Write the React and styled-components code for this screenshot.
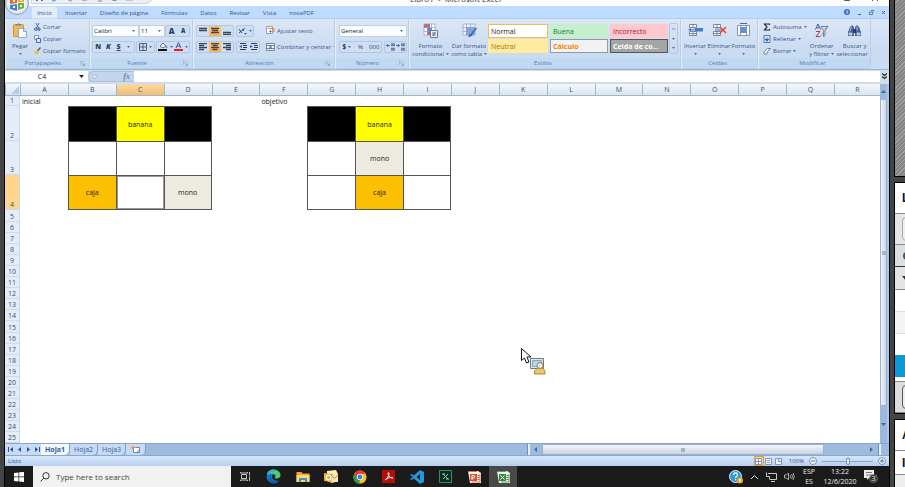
import React from "react";
import styled, { createGlobalStyle, css } from "styled-components";

const Global = createGlobalStyle`
  * { box-sizing: border-box; }
  html, body, #root { height: 100%; }
  body { margin: 0; overflow: hidden; background: #444; font-family: "Open Sans", "Noto Sans", sans-serif; font-size: 6px; color: #36558c; }
  button, input, select { font: inherit; color: inherit; margin: 0; padding: 0; border: 0; background: none; border-radius: 0; outline: 0; }
  svg { display: block; flex: none; }
`;

const Desktop = styled.div`
  display: flex;
  gap: 4px;
  height: 100vh;
  padding-left: 4px;
  background: #444;
`;
const Screen = styled.main`
  flex: 1;
  min-width: 0;
  display: flex;
  flex-direction: column;
  border: solid #000;
  border-width: 0 1px;
  background: #fff;
`;

/* ---------- title and tabs ---------- */
const TitleBar = styled.header`
  position: relative;
  flex: none;
  height: 6px;
  background: #fdfdfe;
`;
const QuickBar = styled.div`
  position: absolute;
  left: 26px;
  top: -8px;
  width: 122px;
  height: 12px;
  display: flex;
  align-items: flex-end;
  gap: 8px;
  padding: 0 6px 1px 4px;
  border: 1px solid #c9d3e2;
  border-radius: 0 0 8px 0;
  background: #e9eff8;
`;
const TitleText = styled.div`
  position: absolute;
  left: 405px;
  top: -6px;
  font-size: 8px;
  line-height: 10px;
  color: #333;
  white-space: pre;
`;
const WindowKeys = styled.div`
  position: absolute;
  right: 10px;
  top: -6px;
  display: flex;
  gap: 20px;
`;
const Orb = styled.button`
  position: absolute;
  left: 0;
  top: -9px;
  z-index: 2;
`;
const TabBar = styled.nav`
  flex: none;
  display: flex;
  gap: 1px;
  height: 13px;
  padding-left: 26px;
  background: #bfdbff;
  border-bottom: 1px solid #b4cdee;
`;
const Tab = styled.button`
  flex: none;
  height: 13px;
  line-height: 14px;
  color: #33548c;
  && { padding: 0 6px; border-radius: 3px 3px 0 0; }
  ${(p) => p.$active && css`&& { background: #e3edfa; box-shadow: inset 0 0 0 1px #c7dcf5; }`}
`;
const TabKeys = styled.div`
  margin-left: auto;
  display: flex;
  align-items: center;
  gap: 7px;
  padding-right: 3px;
`;

/* ---------- ribbon ---------- */
const Ribbon = styled.section`
  flex: none;
  display: flex;
  height: 51px;
  border-bottom: 1px solid #9db6d6;
  background: linear-gradient(#dbe7f5, #cbdcf1 60%, #c9ddf4);
`;
const Group = styled.section`
  flex: none;
  display: flex;
  flex-direction: column;
  width: ${(p) => p.$width}px;
  border: 1px solid #b7cee9;
  border-left-color: #e6f0fb;
  border-top: 0;
  border-radius: 0 0 3px 3px;
  overflow: hidden;
`;
const GroupBody = styled.div`
  flex: 1;
  display: flex;
  align-items: center;
  gap: ${(p) => p.$gap || 0}px;
  padding: 0 ${(p) => p.$pad || 0}px;
`;
const GroupTitle = styled.div`
  display: flex;
  align-items: center;
  height: 10px;
  padding-right: 4px;
  line-height: 10px;
  background: #c1d8f1;
  color: #5679b0;
  span { flex: 1; text-align: center; }
`;
const Stack = styled.div`
  flex: none;
  display: flex;
  flex-direction: column;
  gap: ${(p) => p.$gap}px;
`;
const Line = styled.div`
  display: flex;
  gap: ${(p) => p.$gap || 0}px;
`;
const BigButton = styled.button`
  flex: none;
  width: ${(p) => p.$width}px;
  height: 38px;
  && { padding-top: 3px; }
  display: flex;
  flex-direction: column;
  align-items: center;
  line-height: 8px;
  white-space: nowrap;
  svg:first-child { margin-bottom: 4px; }
`;
const Caption = styled.span`
  display: flex;
  align-items: center;
  height: 8px;
  gap: 2px;
  && svg { margin: 0; }
`;
const SmallButton = styled.button`
  display: flex;
  align-items: center;
  gap: 2px;
  height: 12px;
  line-height: 10px;
  white-space: nowrap;
`;
const ButtonSet = styled.div`
  display: flex;
  align-items: center;
  height: 12px;
  width: ${(p) => p.$width}px;
  border: 1px solid #b0c8e6;
  border-radius: 2px;
  background: #cfdff3;
`;
const Key = styled.button`
  flex: 1;
  height: 10px;
  display: flex;
  align-items: center;
  justify-content: center;
  gap: 2px;
  && {
    line-height: 10px;
    color: #2c3f60;
    font-size: ${(p) => p.$size || 6}px;
    font-weight: ${(p) => (p.$bold ? 800 : 400)};
    font-style: ${(p) => (p.$italic ? "italic" : "normal")};
    text-decoration: ${(p) => (p.$under ? "underline" : "none")};
  }
  ${(p) => p.$on && css`&& { background: linear-gradient(#fcc87c, #fdb04e); }`}
`;
const Picker = styled.label`
  position: relative;
  display: block;
  width: ${(p) => p.$width}px;
  height: 12px;
  background: #fbfdff;
  border: 1px solid #bcd0ea;
  select { appearance: none; display: block; width: 100%; height: 10px; line-height: 10px; padding-left: 1px; color: #222; }
  svg { position: absolute; right: 3px; top: 4px; pointer-events: none; }
`;
const Divider = styled.div`
  width: 1px;
  height: 30px;
  background: #b0c8e6;
`;
const Gallery = styled.div`
  display: grid;
  grid-template-columns: 61px 59px 59px;
  grid-auto-rows: 14px;
  gap: 1px;
`;
const StyleTile = styled.button`
  && {
    border: 1px solid ${(p) => p.$line || p.$bg};
    background: ${(p) => p.$bg};
    color: ${(p) => p.$ink};
    padding-left: 2px;
    margin-right: 1px;
    font-size: 7px;
    line-height: 11px;
    font-weight: ${(p) => (p.$bold ? 700 : 400)};
  }
  text-align: left;
  white-space: nowrap;
`;
const Scroller = styled.div`
  display: flex;
  flex-direction: column;
  width: 9px;
  height: 31px;
  border: 1px solid #b3c9e6;
  border-radius: 2px;
`;

/* ---------- formula bar ---------- */
const FormulaBar = styled.div`
  flex: none;
  display: flex;
  height: 14px;
  padding: 1px 0 2px;
  background: #cfdcec;
`;
const NameBox = styled.label`
  display: flex;
  align-items: center;
  width: 83px;
  padding-right: 4px;
  background: #fff;
  input { flex: 1; min-width: 0; text-align: center; font-size: 7px; color: #222; height: 11px; }
`;
const FxPill = styled.div`
  display: flex;
  justify-content: space-between;
  align-items: center;
  width: 46px;
  padding: 0 4px 0 3px;
  background: #c3d5ec;
  border: 1px solid #a9c1de;
  border-right: 0;
  border-radius: 6px 0 0 6px;
  font: italic 700 8px/9px "Liberation Serif", serif;
  color: #6b86ad;
`;
const FormulaInput = styled.input`
  flex: 1;
  min-width: 0;
  && { background: #fff; }
`;
const Expand = styled.button`
  width: 9px;
  display: grid;
  place-items: center;
`;

/* ---------- sheet ---------- */
const SheetArea = styled.div`
  flex: 1;
  min-height: 0;
  display: flex;
  background: #fff;
`;
const SheetView = styled.div`
  flex: 1;
  min-width: 0;
  overflow: hidden;
`;
const Sheet = styled.table`
  width: 100%;
  table-layout: fixed;
  border-collapse: separate;
  border-spacing: 0;
  font-size: 7px;
  color: #222;
  th, td { padding: 0; height: 11px; line-height: 9px; font-weight: 400; white-space: nowrap; }
`;
const SheetCol = styled.col`
  width: ${(p) => (p.$width ? `${p.$width}px` : "auto")};
`;
const ColHead = styled.th`
  background: ${(p) => (p.$on ? "linear-gradient(#f9d9a6, #f3be6f)" : "linear-gradient(#f5f8fc, #dbe4f0)")};
  border-left: 1px solid #9eb6ce;
  border-bottom: 1px solid #9eb6ce;
  color: #39506f;
  && { height: 12px; }
`;
const RowHead = styled.th`
  background: ${(p) => (p.$on ? "#ffd58d" : "#e4ecf7")};
  border-bottom: 1px solid #cddaea;
  border-right: 1px solid #cddaea;
  color: #39506f;
  vertical-align: bottom;
  && { height: ${(p) => p.$height}px; }
`;
const fills = { black: "#000", yellow: "#ff0", orange: "#fcbf02", grey: "#edebe0", blank: "#fff" };
const Cell = styled.td`
  text-align: ${(p) => (p.$fill ? "center" : "left")};
  && { height: auto; padding-left: ${(p) => (p.$fill ? 0 : 2)}px; }
  ${(p) => p.$fill && css`
    background: ${fills[p.$fill]};
    border: solid #555;
    border-width: 1px ${p.$last ? 1 : 0}px ${p.$low ? 1 : 0}px 1px;
  `}
  ${(p) => p.$picked && css`box-shadow: inset 0 0 0 1px #999, 1px 0 0 #555;`}
`;
const VScroll = styled.div`
  flex: none;
  display: flex;
  flex-direction: column;
  align-items: center;
  width: 9px;
  background: #9bb8dd;
  border-right: 2px solid #acc7ea;
`;
const ScrollKey = styled.button`
  display: grid;
  place-items: center;
  width: ${(p) => p.$width || 7}px;
  height: ${(p) => p.$height}px;
`;
const VThumb = styled.div`
  flex: 1;
  width: 7px;
  display: grid;
  place-items: center;
  background: linear-gradient(90deg, #f2f5f9, #ccd5e1);
  border: 1px solid #9bb3d3;
`;
const Grip = styled.i`
  width: 4px;
  height: 4px;
  background: #a8b2c1;
`;

/* ---------- sheet tabs, status ---------- */
const SheetTabs = styled.nav`
  flex: none;
  display: flex;
  align-items: stretch;
  height: 12px;
  background: #9dbbde;
  border-top: 1px solid #86a5cc;
`;
const NavKeys = styled.div`
  display: flex;
  align-items: center;
  gap: 4px;
  width: 36px;
  padding-left: 3px;
  background: #c6daf4;
`;
const SheetTab = styled.button`
  && {
    padding: 0 4px;
    border-right: 1px solid #7f9dc4;
    border-radius: 0 0 5px 0;
    background: ${(p) => (p.$active ? "#f5f9ff" : "#c6daf4")};
    line-height: 11px;
    color: #365b97;
    font-weight: ${(p) => (p.$active ? 700 : 400)};
    font-size: 7px;
  }
`;
const HScroll = styled.div`
  display: flex;
  margin-left: auto;
  width: 41%;
`;
const HThumb = styled.div`
  flex: 1;
  display: grid;
  place-items: center;
  background: linear-gradient(#f4f6fa, #c8d2e0);
  border: 1px solid #9bb3d3;
`;
const HTrack = styled.div`
  width: 18%;
  display: flex;
  align-items: center;
  justify-content: flex-end;
  gap: 4px;
  padding-right: 8px;
`;
const SplitMark = styled.i`
  width: 3px;
  height: 11px;
  background: #e8eff9;
  border-left: 1px solid #6f8fbb;
`;
const StatusBar = styled.footer`
  flex: none;
  display: flex;
  align-items: center;
  height: 11px;
  padding: 0 3px;
  line-height: 9px;
  background: linear-gradient(#d8e6f9, #b6d0f1);
  border-top: 1px solid #8aa8cf;
`;
const StatusRight = styled.div`
  display: flex;
  align-items: center;
  gap: 5px;
  margin-left: auto;
`;
const ViewKey = styled.button`
  display: grid;
  place-items: center;
  width: 10px;
  height: 10px;
  ${(p) => p.$on && css`&& { background: #fed28b; box-shadow: inset 0 0 0 1px #dda24d; }`}
`;
const ZoomSlider = styled.input.attrs({ type: "range" })`
  appearance: none;
  width: 51px;
  height: 9px;
  && { background: linear-gradient(#8ba6ca, #8ba6ca) center / 100% 1px no-repeat; }
  &::-webkit-slider-thumb { appearance: none; width: 4px; height: 7px; background: #e6eef9; border: 1px solid #7792b8; border-radius: 0 0 2px 2px; }
`;

/* ---------- taskbar ---------- */
const Taskbar = styled.footer`
  flex: none;
  display: flex;
  height: 21px;
  background: #1b1b1b;
  color: #eee;
  font-size: 7px;
`;
const StartKey = styled.button`
  flex: none;
  width: 28px;
  display: grid;
  place-items: center;
`;
const Apps = styled.div`
  flex: none;
  width: 32.4%;
  display: grid;
  grid-template-columns: repeat(10, 1fr);
`;
const TaskKey = styled.button`
  display: grid;
  place-items: center;
  && { background: ${(p) => (p.$active ? "#494949" : "transparent")}; }
`;
const Search = styled.label`
  flex: none;
  display: flex;
  align-items: center;
  gap: 6px;
  width: 198px;
  padding-left: 7px;
  background: #f1f1f1;
  input { flex: 1; min-width: 0; font-size: 8px; line-height: 12px; }
  input::placeholder { color: #444; opacity: 1; }
`;
const Tray = styled.div`
  display: flex;
  align-items: center;
  gap: 7px;
  margin-left: auto;
  padding-right: 10px;
`;
const TrayText = styled.div`
  width: ${(p) => p.$width}px;
  text-align: center;
  line-height: 10px;
  white-space: nowrap;
`;

/* ---------- second window at the side ---------- */
const Side = styled.aside`
  flex: none;
  width: 11px;
  display: flex;
  flex-direction: column;
  gap: 5px;
  overflow: hidden;
`;
const Panel = styled.section`
  flex: ${(p) => (p.$fill ? "1" : "none")};
  border: solid #000;
  border-width: ${(p) => (p.$first ? 0 : 1)}px 0 ${(p) => (p.$fill ? 0 : 1)}px 1px;
  background: #fff;
`;
const Hatch = styled.div`
  height: 176px;
  background: repeating-linear-gradient(135deg, #858585 0 2px, #a0a0a0 2px 3px);
`;
const PanelRow = styled.div`
  height: ${(p) => p.$height}px;
  padding-left: 7px;
  display: flex;
  align-items: center;
  overflow: hidden;
  background: ${(p) => p.$bg || "#fff"};
  border-bottom: 1px solid ${(p) => p.$line || "#888"};
  font: 700 12px/14px "Liberation Sans", sans-serif;
  color: #111;
`;
const PanelButton = styled.button`
  flex: none;
  width: 30px;
  height: 24px;
  && { border: 1px solid ${(p) => p.$line}; border-radius: 4px; background: #eee; }
`;

const Pointer = styled.div`
  position: fixed;
  left: 57.5%;
  top: 347px;
  z-index: 5;
  pointer-events: none;
`;

/* ---------- drawings ---------- */
const Svg = ({ w = 10, h = w, vb, children }) => (
  <svg width={w} height={h} viewBox={vb || `0 0 ${w} ${h}`} fill="none" aria-hidden="true">{children}</svg>
);
const Caret = ({ c = "#4e6a98" }) => <Svg w={3} h={2}><path d="M0 0h3L1.5 2z" fill={c} /></Svg>;
const Launch = () => <Svg w={5}><path d="M0 4V0h4M2 2l2 2M4.5 2.5v2h-2" stroke="#7f9dc6" strokeWidth=".8" /></Svg>;
const Tri = ({ d, c = "#4b678f" }) => <Svg w={5}><path d={{ up: "M0 4h5L2.5 1z", down: "M0 1h5L2.5 4z", left: "M4 0v5L1 2.5z", right: "M1 0v5l3-2.5z" }[d]} fill={c} /></Svg>;

const OfficeOrb = () => (
  <Svg w={24}>
    <circle cx="12" cy="12" r="11.5" fill="#dfe6ef" stroke="#8d9db4" />
    <circle cx="12" cy="12" r="9" fill="#f2f5fa" />
    <path d="M5 7l7-2v7l-7 1z" fill="#e8662a" /><path d="M13 5h6v6h-6z" fill="#f3a52d" />
    <path d="M5 14l7-1v7l-7-2z" fill="#3f7fd0" /><path d="M13 12h6v5l-6 2z" fill="#72ad3a" />
    <path d="M8 9h2v2H8zM15 8h2v2h-2zM8 15h2v2H8zM15 14h2v2h-2z" fill="#fff" />
  </Svg>
);
const Paste = () => (
  <Svg w={14} h={15}>
    <rect x=".5" y="1.500" width="10" height="12" rx="1" fill="#f0b85b" stroke="#cc8f35" />
    <path d="M3 2.500V1h1.500l1-1 1 1H8v1.500z" fill="#77879f" />
    <path d="M5.500 5.500h5l3 3v6h-8z" fill="#fff" stroke="#98a9c2" /><path d="M10.500 5.500v3h3" stroke="#98a9c2" />
  </Svg>
);
const Cut = () => <Svg w={7} h={8}><path d="M2 0l2.500 5M5 0L2.500 5" stroke="#53719e" /><circle cx="1.800" cy="6.200" r="1.200" stroke="#2855a6" /><circle cx="5" cy="6.200" r="1.200" stroke="#2855a6" /></Svg>;
const Copy = () => <Svg w={7} h={8}><path d="M.5 .5h4v4h-4z" fill="#fff" stroke="#7394c5" /><path d="M2.500 3.500h4v4h-4z" fill="#d8e6fa" stroke="#3e6db4" /></Svg>;
const Brush = () => <Svg w={7} h={8}><path d="M6.500 .5L3.500 4" stroke="#4b5f83" strokeWidth="1.500" /><path d="M0 5l3-2 2 2-2 3z" fill="#f1b940" /></Svg>;
const BordersIcon = () => <Svg w={8}><path d="M.5 .5h7v7h-7zM4 .5v7M.5 4h7" stroke="#41536f" strokeWidth=".9" /></Svg>;
const FillIcon = () => <Svg w={10} h={9}><path d="M2 4l3-3 3 3-3 2z" fill="#fff" stroke="#55709b" /><path d="M8 3l1.500 3H8z" fill="#3e78c4" /><path d="M0 7h9v2H0z" fill="#111" /></Svg>;
const FontColor = () => <Svg w={9} h={9}><path d="M2 6l2.500-5.500L7 6M3 4.200h3" stroke="#35598f" /><path d="M0 7h9v2H0z" fill="#f01818" /></Svg>;
const Bars = ({ l, at = 0, y = 0 }) => (
  <Svg w={8}>{l.map((n, i) => <path key={i} d={`M${at === 1 ? (8 - n) / 2 : at === 2 ? 8 - n : 0} ${y + i * 2 + 0.5}h${n}`} stroke="#3c4452" strokeWidth="1.300" />)}</Svg>
);
const Orient = () => <Svg w={9} h={8}><path d="M1 6l6-5M1 2l3 4M4 2l2 2" stroke="#3c4c68" /><path d="M6 6h3l-1.500 2z" fill="#3c6db4" /></Svg>;
const Indent = ({ right }) => <Svg w={8}><path d="M1 .5h6M4 2.500h4M4 4.500h4M1 6.500h6" stroke="#2c3b56" /><path d={right ? "M0 2l3 1.500L0 5z" : "M3 2L0 3.500 3 5z"} fill="#2a62b8" /></Svg>;
const Wrap = () => <Svg w={9}><path d="M.5 .5h6v7h-6z" fill="#fff" stroke="#8ba2c1" /><path d="M1.500 2.500h6.500v3H4" stroke="#e1912f" /><path d="M5 4L3 5.500 5 7z" fill="#3468af" /></Svg>;
const Merge = () => <Svg w={9} h={8}><path d="M.5 .5h8v7h-8zM.5 2.500h8M.5 5.500h8" fill="#eff5fc" stroke="#6c87ad" /><path d="M3.500 5.500l1-3 1 3" stroke="#334d76" strokeWidth=".8" /></Svg>;
const Decimal = ({ less }) => <Svg w={9} h={8}><path d="M5.500 .5h1v2.500h-1zM7.500 .5h1v2.500h-1zM5.500 5h1v2.500h-1zM7.500 5h1v2.500h-1z" stroke="#3f506c" strokeWidth=".6" /><path d={less ? "M0 2.500h3.500M2 1l1.500 1.500L2 4" : "M4 2.500H.5M2 1L.5 2.500 2 4"} stroke="#2d67bd" strokeWidth=".9" /></Svg>;
const CondIcon = () => (
  <Svg w={15} h={15}>
    <path d="M1 1h11v11H1z" fill="#fff" /><path d="M1 1h6v4H1zM4 8h4v4H4z" fill="#df5653" /><path d="M4 5h5v3H4z" fill="#5a86ce" />
    <path d="M1 1h11v11H1zM1 4.500h11M1 8.500h11M4.500 1v11M8.500 1v11" stroke="#86a1c9" strokeWidth=".7" />
    <path d="M7.500 7.500h7v7h-7z" fill="#eff3f9" stroke="#647a9c" /><path d="M9 10h4M9 12h4M12 9l-2 4" stroke="#394d6d" strokeWidth=".7" />
  </Svg>
);
const TableIcon = () => (
  <Svg w={15} h={15}>
    <path d="M1 1h12v11H1z" fill="#eaf2fd" /><path d="M4 4h9v8H4z" fill="#7da6e3" /><path d="M1 1h12v11H1zM1 4.500h12M1 8.500h12M4.500 1v11M8.500 1v11" stroke="#86a1c9" strokeWidth=".7" />
    <path d="M14.500 5l-5 6" stroke="#54657f" strokeWidth="1.500" /><path d="M6 14c1-3 2-4 4-3s-1 3-4 3z" fill="#456fab" />
  </Svg>
);
const CellsIcon = ({ kind }) => (
  <Svg w={15} h={15}>
    {kind === "format" ? (
      <><path d="M1.500 2.500h12v10h-12zM4.500 2v11M10.500 2v11" fill="#fff" stroke="#8195b4" /><path d="M5 4h5v6H5z" fill="#5f92dc" /><path d="M4 .5h7" stroke="#3b68ab" /></>
    ) : (
      <><path d="M1.500 1.500h7v3h-7zM1.500 8.500h7v4h-7zM5 1v4M5 8v5M1.500 10.500h7" fill="#fff" stroke="#707d92" strokeWidth=".9" />
        {kind === "insert" ? <><path d="M7 5h8v3.500H7z" fill="#4b7ac8" /><path d="M0 6.800L3 5v3.500z" fill="#4b7ac8" /><path d="M3 6.800h4" stroke="#4b7ac8" /></>
          : <><path d="M3 5.500h7v2.500H3z" fill="#8caee3" /><path d="M8 4l6 6M14 4L8 10" stroke="#e5432f" strokeWidth="1.500" /></>}
      </>
    )}
  </Svg>
);
const Sigma = () => <Svg w={8}><path d="M6.500 2V1H1.500l2.500 3-2.500 3h5V6" stroke="#20304c" strokeWidth="1.200" /></Svg>;
const FillDown = () => <Svg w={8}><path d="M1 .5h6v7H1z" fill="#dbe9fc" stroke="#5579b2" /><path d="M4 2v2M2 4h4L4 6.500z" fill="#1d5fc9" stroke="#1d5fc9" strokeWidth=".5" /></Svg>;
const Eraser = () => <Svg w={8}><path d="M1 5l3.500-3.500h3L4 5v2H1z" fill="#fff" stroke="#71829e" /></Svg>;
const SortIcon = () => (
  <Svg w={15} h={15}>
    <path d="M1.500 6.500L4 1l2.500 5.500M2.500 4.800h3" stroke="#3d5fa8" /><path d="M2 8.500h4L2 13.500h4" stroke="#bd3945" />
    <path d="M7 3.500h7l-3 4v5l-1.500 1V7.500z" fill="#d2dae6" stroke="#6f8098" /><path d="M6 14l8-12" stroke="#92a0b5" strokeWidth=".7" />
  </Svg>
);
const FindIcon = () => (
  <Svg w={15} h={15}>
    <path d="M3 4l2-2 2 2v9H1V9zM8 4l2-2 2 2 2 5v4H8z" fill="#476697" /><path d="M6 6h3v4H6z" fill="#273f68" />
    <path d="M2 10h3v2H2zM10 10h3v2h-3zM4.500 3.500L3 8M10 3.500v4" stroke="#c3d4ee" fill="#a4bbdd" strokeWidth=".8" />
  </Svg>
);
const NewSheet = () => <Svg w={11} h={9}><path d="M3.500 2.500h6v5h-6z" fill="#fff" stroke="#6787b5" /><path d="M6 8l3.500-3" stroke="#6787b5" /><path d="M3 0l1 2 2 .5-2 1L3 5.500 2 3.500l-2-1L2 2z" fill="#f19b38" /></Svg>;
const First = ({ flip }) => <Svg w={5}>{flip ? <path d="M0 0l3 2.500L0 5zM4 0h1v5H4z" fill="#27549c" /> : <path d="M5 0L2 2.500 5 5zM0 0h1v5H0z" fill="#27549c" />}</Svg>;
const ViewIcon = ({ n }) => <Svg w={7}><path d={["M.5 .5h6v6h-6zM.5 3.500h6M3.500 .5v6", "M.5 .5h6v6h-6zM2 2.500h3M2 4.500h3", "M.5 .5h6v6h-6zM3.500 .5v3h3"][n]} fill="#f2f7ff" stroke="#6786b2" strokeWidth=".8" /></Svg>;
const Round = ({ plus }) => <Svg w={8}><circle cx="4" cy="4" r="3.500" fill="#f3f7fd" stroke="#7693bd" /><path d={plus ? "M2 4h4M4 2v4" : "M2 4h4"} stroke="#4f719f" /></Svg>;

const Windows = () => <Svg w={10}><path d="M0 1l4.500-.6v4.200H0zM5.200 .3L10 0v4.600H5.200zM0 5.300h4.500v4.200L0 9zM5.200 5.300H10V10l-4.800-.4z" fill="#fff" /></Svg>;
const Magnifier = () => <Svg w={10}><circle cx="6" cy="3.800" r="3.200" stroke="#333" /><path d="M3.800 6.200L.5 9.500" stroke="#333" /></Svg>;
const TaskView = () => <Svg w={11} h={9}><path d="M1.500 2.500h5v4h-5zM.5 0v1h7V0M.5 9V8h7v1M9.500 0v3M9.500 5v4M9 4h1" stroke="#ddd" strokeWidth=".9" /></Svg>;
const Edge = () => (
  <Svg w={15} vb="0 0 16 16">
    <path d="M1 7C1 3 4 .5 8 .5s7.500 3 7.500 6S13 10.500 10 10c-1.500 0-.5-1 0-2 .3-2-2-3-4-2.500C3.500 6 2 7 1 7z" fill="#4dcc75" />
    <path d="M1 7C1 3 4 .5 8 .5c2 0 4 1 5 2C8 1 4 4 1 7z" fill="#2bb4dc" />
    <path d="M.6 8C1.500 5 5 4.500 7.500 6 5 8 7 12.500 13.500 12.500 12 15 9 16 6 15 3 14 .5 11 .6 8z" fill="#1673c4" />
    <path d="M5.500 8c-1 4 3 6 8.500 4.500C12 15 9 16 6.500 15 4 13.500 3.500 10 5.500 8z" fill="#0c59ac" />
  </Svg>
);
const Folder = () => <Svg w={14} h={12}><path d="M.5 1h5l1 1.500h7V11H.5z" fill="#e8a92d" /><path d="M.5 4h13v7H.5z" fill="#ffd867" /><path d="M3 7h8v4H9V9H5v2H3z" fill="#3e91d7" /></Svg>;
const Outlook = () => <Svg w={14} h={14}><path d="M3 1l9-1 2 4v7l-6 2-5-2z" fill="#fff0c4" /><path d="M0 3l9 1v8l-9-1z" fill="#f0ad38" /><circle cx="4.500" cy="7.500" r="2.300" stroke="#fff" strokeWidth="1.300" /><path d="M7 5h7v7H8z" fill="#fbe6b2" /><path d="M7 5l3.500 3.500L14 5" stroke="#c38b2e" /></Svg>;
const Chrome = () => (
  <Svg w={14} vb="0 0 16 16">
    <circle cx="8" cy="8" r="7.500" fill="#fbc116" /><path d="M1.500 4.200A7.500 7.500 0 0 1 14.500 4.400L8 4.500 5 10z" fill="#e33b2e" />
    <path d="M1.500 4.200l3.400 5.600L8 11.500l-1 4A7.500 7.500 0 0 1 1.500 4.200z" fill="#269e4b" /><circle cx="8" cy="8" r="3.600" fill="#fff" /><circle cx="8" cy="8" r="2.800" fill="#3d7ee8" />
  </Svg>
);
const Acrobat = () => <Svg w={13}><path d="M0 0h13v13H0z" fill="#b90d0b" /><path d="M3 10c2-1 4-4 4-7-1-1-1.500 1 0 3s3 2.500 4 2c-1-1.500-6 0-8 2z" stroke="#fff" strokeWidth=".9" /></Svg>;
const Code = () => <Svg w={14}><path d="M10 0l4 2v10l-4 2-6-5.500L1.500 10 0 9l3-2-3-2 1.500-1L4 5.500zM10 4L6.500 7l3.500 3z" fill="#2797dd" fillRule="evenodd" /></Svg>;
const GreenBox = () => <Svg w={13}><path d="M.5 .5h12v12H.5z" fill="#0c2a20" stroke="#2f8f68" /><path d="M4 4l5 5M4 9l2-2M7 6l2-2M3 4h3M7 9h3" stroke="#91d0b4" /></Svg>;
const OfficeDoc = ({ c, power }) => (
  <Svg w={14}>
    <path d="M1 1h10l3 2v10H3z" fill="#f6f4ee" /><path d="M1 1.500h9M5 12h8M13 4v8" stroke={c} strokeWidth=".8" /><path d="M3 4h7v7H3z" fill={c} />
    <path d={power ? "M5 10V5.500h1.500a1 1 0 0 1 0 2.500H5" : "M4.500 5.500l4 4M8.500 5.500l-4 4"} stroke="#fff" /><path d="M10.500 5.500h2M10.500 7.500h2M10.500 9.500h2" stroke={c} />
  </Svg>
);
const Help = () => <Svg w={14}><circle cx="6.500" cy="6.500" r="6" fill="#2b98d7" stroke="#e6f5ff" /><path d="M4.500 5c0-3 4-2.500 4 0 0 1.500-2 1.500-2 3M6.500 9v1.200" stroke="#fff" strokeWidth="1.300" /><circle cx="11" cy="10.500" r="3" fill="#f5a928" /><path d="M11 9v3" stroke="#fff" /></Svg>;
const Up = () => <Svg w={9} h={6}><path d="M1 5l3.500-3.500L8 5" stroke="#ddd" /></Svg>;
const Net = () => <Svg w={11} h={10}><path d="M2 1.500h8.500v6H4M.5 .5v4h3V7.500M5 9.500h4" stroke="#ddd" strokeWidth=".9" /></Svg>;
const Sound = () => <Svg w={11} h={9}><path d="M.5 3h2l2-2v7l-2-2h-2zM6 3q1 1.500 0 3M7.500 2q2 2.500 0 5M9 1q2.500 3.500 0 7" stroke="#ccc" strokeWidth=".8" /></Svg>;
const Note = () => <Svg w={15} h={13}><path d="M0 0h10v8H5l-2 2V8H0z" fill="#eee" /><path d="M2 2.500h6M2 5h6" stroke="#555" strokeWidth=".8" /><circle cx="9.500" cy="8.500" r="4" fill="#333" stroke="#888" strokeWidth=".7" /><text x="9.500" y="11" fontSize="7" textAnchor="middle" fill="#eee">3</text></Svg>;
const Cursor = () => (
  <Svg w={28} h={29}>
    <path d="M1.500 1.500v12l3-2.500 2 5 2.500-1-2-5h4z" fill="#fff" stroke="#111" />
    <path d="M10.500 11.500h13v10h-13z" fill="#e6e6e2" stroke="#777" /><path d="M12.500 13.500h9v6h-9z" fill="#b5d7ec" stroke="#7fa8c1" />
    <path d="M14.500 27v-3l3-3h5l2.500 3v3z" fill="#efc567" stroke="#b1843c" /><circle cx="20" cy="18.500" r="3" fill="#eee5db" stroke="#8e8174" />
  </Svg>
);

/* ---------- data ---------- */
const columns = "ABCDEFGHIJKLMNOPQR".split("");
const cells = {
  A1: { text: "inicial" }, F1: { text: "objetivo" },
  B2: { fill: "black" }, C2: { fill: "yellow", text: "banana" }, D2: { fill: "black", last: true },
  B3: { fill: "blank" }, C3: { fill: "blank" }, D3: { fill: "blank", last: true },
  B4: { fill: "orange", text: "caja", low: true }, C4: { fill: "blank", low: true, picked: true }, D4: { fill: "grey", text: "mono", last: true, low: true },
  G2: { fill: "black" }, H2: { fill: "yellow", text: "banana" }, I2: { fill: "black", last: true },
  G3: { fill: "blank" }, H3: { fill: "grey", text: "mono" }, I3: { fill: "blank", last: true },
  G4: { fill: "blank", low: true }, H4: { fill: "orange", text: "caja", low: true }, I4: { fill: "blank", last: true, low: true },
};
const rowHeights = { 1: 10, 2: 35, 3: 34, 4: 35, 5: 12, 15: 12 };
const styleTiles = [
  { t: "Normal", bg: "#fff", ink: "#222", line: "#f0b95c" },
  { t: "Buena", bg: "#c6efce", ink: "#217a2b" },
  { t: "Incorrecto", bg: "#ffc7ce", ink: "#9c1b26" },
  { t: "Neutral", bg: "#ffeb9c", ink: "#9c7010" },
  { t: "Cálculo", bg: "#f2f2f2", ink: "#fa7d00", line: "#8f9aaa", bold: true },
  { t: "Celda de co...", bg: "#a5a5a5", ink: "#fff", line: "#555", bold: true },
];

const RibbonGroup = ({ title, width, gap, pad, launch, children }) => (
  <Group $width={width} aria-label={title}>
    <GroupBody $gap={gap} $pad={pad}>{children}</GroupBody>
    <GroupTitle><span>{title}</span>{launch && <Launch />}</GroupTitle>
  </Group>
);
const Big = ({ icon, width, lines, drop }) => (
  <BigButton $width={width}>
    {icon}
    {lines.map((l, i) => <Caption key={l}>{l}{drop && i === 1 && <Caret />}</Caption>)}
    {lines.length === 1 && <Caption><Caret /></Caption>}
  </BigButton>
);
const Choice = ({ width, label, value }) => (
  <Picker $width={width}><select aria-label={label} defaultValue={value}><option>{value}</option></select><Caret /></Picker>
);

function RibbonBar() {
  return (
    <Ribbon>
      <RibbonGroup title="Portapapeles" width={85} launch>
        <Big width={28} icon={<Paste />} lines={["Pegar"]} />
        <Stack $gap={0}>
          <SmallButton><Cut />Cortar</SmallButton>
          <SmallButton><Copy />Copiar</SmallButton>
          <SmallButton><Brush />Copiar formato</SmallButton>
        </Stack>
      </RibbonGroup>
      <RibbonGroup title="Fuente" width={103} pad={1} launch>
        <Stack $gap={4}>
          <Line>
            <Choice width={47} label="Fuente" value="Calibri" />
            <Choice width={26} label="Tamaño" value="11" />
            <ButtonSet $width={25}><Key $size={8} $bold>A</Key><Key $size={6} $bold>A</Key></ButtonSet>
          </Line>
          <Line $gap={1}>
            <ButtonSet $width={43}><Key $bold $size={7}>N</Key><Key $bold $italic $size={7}>K</Key><Key $bold $under $size={7}>S</Key><Key aria-label="Subrayado"><Caret /></Key></ButtonSet>
            <ButtonSet $width={19}><Key aria-label="Bordes"><BordersIcon /><Caret /></Key></ButtonSet>
            <ButtonSet $width={34}><Key aria-label="Relleno"><FillIcon /><Caret /></Key><Key aria-label="Color"><FontColor /><Caret /></Key></ButtonSet>
          </Line>
        </Stack>
      </RibbonGroup>
      <RibbonGroup title="Alineación" width={142} pad={2} gap={3} launch>
        <Stack $gap={4}>
          <Line $gap={2}>
            <ButtonSet $width={38}><Key aria-label="Superior"><Bars l={[8, 8]} y={1} /></Key><Key $on aria-label="Medio"><Bars l={[8, 6, 8]} at={1} y={1} /></Key><Key aria-label="Inferior"><Bars l={[8, 8]} y={5} /></Key></ButtonSet>
            <ButtonSet $width={18}><Key aria-label="Orientación"><Orient /><Caret /></Key></ButtonSet>
          </Line>
          <Line $gap={2}>
            <ButtonSet $width={38}><Key aria-label="Izquierda"><Bars l={[8, 5, 8, 5]} /></Key><Key $on aria-label="Centro"><Bars l={[8, 5, 8, 5]} at={1} /></Key><Key aria-label="Derecha"><Bars l={[8, 5, 8, 5]} at={2} /></Key></ButtonSet>
            <ButtonSet $width={24}><Key aria-label="Menos sangría"><Indent /></Key><Key aria-label="Más sangría"><Indent right /></Key></ButtonSet>
          </Line>
        </Stack>
        <Divider />
        <Stack $gap={4}>
          <SmallButton><Wrap />Ajustar texto</SmallButton>
          <SmallButton><Merge />Combinar y centrar<Caret /></SmallButton>
        </Stack>
      </RibbonGroup>
      <RibbonGroup title="Número" width={74} pad={3} launch>
        <Stack $gap={4}>
          <Choice width={68} label="Formato de número" value="General" />
          <Line $gap={2}>
            <ButtonSet $width={43}><Key $bold>$<Caret /></Key><Key>%</Key><Key>000</Key></ButtonSet>
            <ButtonSet $width={23}><Key aria-label="Más decimales"><Decimal /></Key><Key aria-label="Menos decimales"><Decimal less /></Key></ButtonSet>
          </Line>
        </Stack>
      </RibbonGroup>
      <RibbonGroup title="Estilos" width={272} pad={1}>
        <Big width={39} icon={<CondIcon />} lines={["Formato", "condicional"]} drop />
        <Big width={38} icon={<TableIcon />} lines={["Dar formato", "como tabla"]} drop />
        <Gallery>
          {styleTiles.map((s) => <StyleTile key={s.t} $bg={s.bg} $ink={s.ink} $line={s.line} $bold={s.bold}>{s.t}</StyleTile>)}
        </Gallery>
        <Scroller>
          <Key aria-label="Subir"><Tri d="up" c="#a8bbd6" /></Key><Key aria-label="Bajar"><Caret /></Key><Key aria-label="Más"><Caret /></Key>
        </Scroller>
      </RibbonGroup>
      <RibbonGroup title="Celdas" width={77} pad={1}>
        <Big width={24} icon={<CellsIcon kind="insert" />} lines={["Insertar"]} />
        <Big width={24} icon={<CellsIcon kind="delete" />} lines={["Eliminar"]} />
        <Big width={25} icon={<CellsIcon kind="format" />} lines={["Formato"]} />
      </RibbonGroup>
      <RibbonGroup title="Modificar" width={113} pad={4}>
        <Stack $gap={0}>
          <SmallButton><Sigma />Autosuma<Caret /></SmallButton>
          <SmallButton><FillDown />Rellenar<Caret /></SmallButton>
          <SmallButton><Eraser />Borrar<Caret /></SmallButton>
        </Stack>
        <Big width={30} icon={<SortIcon />} lines={["Ordenar", "y filtrar"]} drop />
        <Big width={36} icon={<FindIcon />} lines={["Buscar y", "seleccionar"]} drop />
      </RibbonGroup>
    </Ribbon>
  );
}

function Grid() {
  return (
    <Sheet>
      <colgroup><SheetCol $width={15} />{columns.map((c) => <SheetCol key={c} $width={c === "R" ? 46 : 0} />)}</colgroup>
      <thead><tr><ColHead><Svg w={14} h={10}><path d="M13 1v8H5z" fill="#b5cae3" /></Svg></ColHead>{columns.map((c) => <ColHead key={c} $on={c === "C"} scope="col">{c}</ColHead>)}</tr></thead>
      <tbody>
        {Array.from({ length: 25 }, (_, i) => i + 1).map((r) => (
          <tr key={r}>
            <RowHead scope="row" $height={rowHeights[r] || 11} $on={r === 4}>{r}</RowHead>
            {columns.map((c) => {
              const d = cells[c + r] || {};
              return <Cell key={c} $fill={d.fill} $last={d.last} $low={d.low} $picked={d.picked}>{d.text}</Cell>;
            })}
          </tr>
        ))}
      </tbody>
    </Sheet>
  );
}

export default function App() {
  return (
    <Desktop>
      <Global />
      <Screen>
        <TitleBar>
          <Orb aria-label="Office"><OfficeOrb /></Orb>
          <QuickBar>
            <Svg w={7}><path d="M0 0h7v6H0z" fill="#5666ad" /><path d="M2 4h3v2H2z" fill="#fff" /></Svg>
            <Svg w={7}><path d="M1 6q5 0 5-4" stroke="#4a77bd" /></Svg>
            <Svg w={7}><path d="M6 6Q1 6 1 2" stroke="#7896c5" /></Svg>
            <Svg w={7}><path d="M1 2h5v4H1z" fill="#a8b7cf" /></Svg>
            <Svg w={7}><path d="M0 3h7M2 6h4" stroke="#7487a6" /></Svg>
            <Svg w={7}><circle cx="3.500" cy="3" r="3" fill="#5f85bb" /></Svg>
            <Svg w={7}><path d="M0 1h7v5H0z" fill="#bdcade" /></Svg>
          </QuickBar>
          <TitleText>{"Libro1  -  Microsoft Excel"}</TitleText>
          <WindowKeys><Svg w={8}><path d="M1.500 1.500h5v5h-5z" stroke="#555" /></Svg><Svg w={8}><path d="M1 1l6 6M7 1L1 7" stroke="#555" /></Svg></WindowKeys>
        </TitleBar>
        <TabBar>
          {["Inicio", "Insertar", "Diseño de página", "Fórmulas", "Datos", "Revisar", "Vista", "novaPDF"].map((t, i) => <Tab key={t} $active={i === 0}>{t}</Tab>)}
          <TabKeys>
            <Svg w={6}><circle cx="3" cy="3" r="3" fill="#3b6fc3" /><path d="M2 2h2v1H3v2" stroke="#fff" strokeWidth=".6" /></Svg>
            <Svg w={5}><path d="M1 4.500h3" stroke="#49648e" /></Svg>
            <Svg w={5}><path d="M.5 2h3v2.500h-3zM2 .5h3v2" stroke="#49648e" strokeWidth=".8" /></Svg>
            <Svg w={5}><path d="M1 1l3 3M4 1L1 4" stroke="#49648e" /></Svg>
          </TabKeys>
        </TabBar>
        <RibbonBar />
        <FormulaBar>
          <NameBox><input aria-label="Cuadro de nombres" defaultValue="C4" /><Svg w={5} h={3}><path d="M0 0h5L2.500 3z" fill="#222" /></Svg></NameBox>
          <FxPill><Svg w={5}><circle cx="2.500" cy="2.500" r="2" fill="#dce7f5" stroke="#9bb2d0" strokeWidth=".7" /></Svg>fx</FxPill>
          <FormulaInput aria-label="Barra de fórmulas" />
          <Expand aria-label="Expandir"><Svg w={5} h={7}><path d="M0 .5l2.500 2 2.500-2M0 3.500l2.500 2 2.500-2" stroke="#222" strokeWidth="1.200" /></Svg></Expand>
        </FormulaBar>
        <SheetArea>
          <SheetView><Grid /></SheetView>
          <VScroll>
            <ScrollKey $height={15} aria-label="Arriba"><Tri d="up" /></ScrollKey>
            <VThumb><Grip /></VThumb>
            <ScrollKey $height={37} aria-label="Abajo"><Tri d="down" /></ScrollKey>
          </VScroll>
        </SheetArea>
        <SheetTabs>
          <NavKeys><First /><Tri d="left" c="#27549c" /><Tri d="right" c="#27549c" /><First flip /></NavKeys>
          <SheetTab $active>Hoja1</SheetTab><SheetTab>Hoja2</SheetTab><SheetTab>Hoja3</SheetTab>
          <SheetTab aria-label="Insertar hoja"><NewSheet /></SheetTab>
          <HScroll>
            <SplitMark /><ScrollKey $height={11} $width={12} aria-label="Izquierda"><Tri d="left" /></ScrollKey>
            <HThumb><Grip /></HThumb>
            <HTrack><Tri d="right" /><SplitMark /></HTrack>
          </HScroll>
        </SheetTabs>
        <StatusBar>
          Listo
          <StatusRight>
            <Line>{[0, 1, 2].map((n) => <ViewKey key={n} $on={n === 0} aria-label={["Normal", "Diseño", "Saltos"][n]}><ViewIcon n={n} /></ViewKey>)}</Line>
            100%<Round /><ZoomSlider aria-label="Zoom" defaultValue={50} /><Round plus />
          </StatusRight>
        </StatusBar>
        <Taskbar>
          <StartKey aria-label="Inicio"><Windows /></StartKey>
          <Search><Magnifier /><input placeholder="Type here to search" aria-label="Search" /></Search>
          <Apps>
            {[TaskView, Edge, Folder, Outlook, Chrome, Acrobat, Code, GreenBox].map((I, i) => <TaskKey key={i} aria-label={`App ${i + 1}`}><I /></TaskKey>)}
            <TaskKey aria-label="PowerPoint"><OfficeDoc c="#d8502e" power /></TaskKey>
            <TaskKey $active aria-label="Excel"><OfficeDoc c="#35883f" /></TaskKey>
          </Apps>
          <Tray>
            <Help /><Up /><Net /><Sound />
            <TrayText $width={14}>ESP<br />ES</TrayText>
            <TrayText $width={34}>13:22<br />12/6/2020</TrayText>
            <Note />
          </Tray>
        </Taskbar>
      </Screen>
      <Side>
        <Panel $first><Hatch /></Panel>
        <Panel>
          <PanelRow $height={31}>L</PanelRow>
          <PanelRow $height={31} $bg="#e6e6e6"><PanelButton $line="#aaa" aria-label="Opciones" /></PanelRow>
          <PanelRow $height={22} $bg="#ddd" $line="#333"><Svg w={8}><circle cx="5" cy="4" r="4" fill="#456" /></Svg></PanelRow>
          <PanelRow $height={23} $bg="#e4e4e4"><Svg w={8} h={5}><path d="M0 0h8L4 5z" fill="#333" /></Svg></PanelRow>
          <PanelRow $height={22} $line="#ddd" />
          <PanelRow $height={22} $bg="#f4f4f4" $line="#ddd" />
          <PanelRow $height={21} $line="#fff" />
          <PanelRow $height={22} $bg="#0a9bd5" $line="#0a9bd5" />
          <PanelRow $height={5} />
          <PanelRow $height={31} $bg="#ddd"><PanelButton $line="#555" aria-label="Enviar" /></PanelRow>
        </Panel>
        <Panel $fill>
          <PanelRow $height={31}>A</PanelRow>
          <PanelRow $height={24}>I</PanelRow>
          <PanelRow $height={20} $bg="#eee" />
        </Panel>
      </Side>
      <Pointer><Cursor /></Pointer>
    </Desktop>
  );
}
